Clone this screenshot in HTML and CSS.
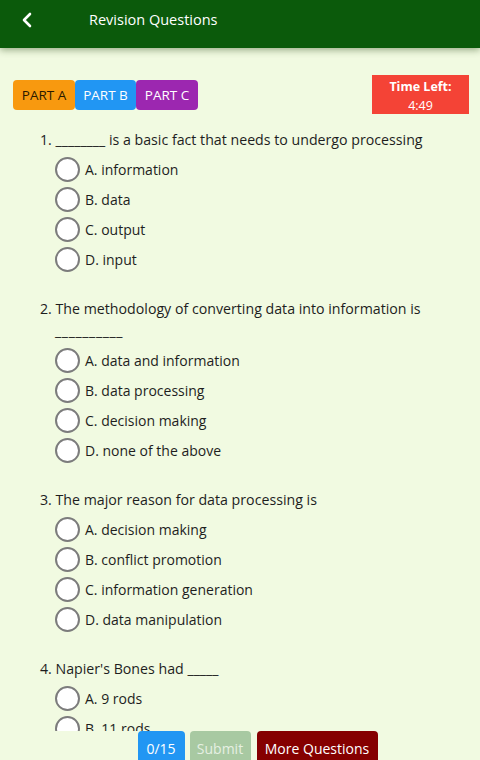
FILE: index.html
```html
<!DOCTYPE html>
<html>
<head>
<meta charset="utf-8">
<link rel="stylesheet" href="styles.css">
</head>
<body>
<div class="app">
  <header class="topbar">
    <svg class="back" width="14" height="16" viewBox="0 0 14 16"><path d="M10 2 L4 8 L10 14" fill="none" stroke="#fff" stroke-width="2.6" stroke-linecap="round" stroke-linejoin="round"/></svg>
    <span class="title">Revision Questions</span>
  </header>
  <main class="content">
    <div class="toolbar">
      <div class="tabs">
        <span class="tab tab-a">PART A</span>
        <span class="tab tab-b">PART B</span>
        <span class="tab tab-c">PART C</span>
      </div>
      <div class="timer">
        <div class="timer-label">Time Left:</div>
        <div class="timer-value">4:49</div>
      </div>
    </div>

    <section class="question">
      <p class="q-text">1. ________ is a basic fact that needs to undergo processing</p>
      <div class="option"><span class="radio"></span><span>A. information</span></div>
      <div class="option"><span class="radio"></span><span>B. data</span></div>
      <div class="option"><span class="radio"></span><span>C. output</span></div>
      <div class="option"><span class="radio"></span><span>D. input</span></div>
    </section>

    <section class="question">
      <p class="q-text">2. The methodology of converting data into information is<br><span class="blank">__________</span></p>
      <div class="option"><span class="radio"></span><span>A. data and information</span></div>
      <div class="option"><span class="radio"></span><span>B. data processing</span></div>
      <div class="option"><span class="radio"></span><span>C. decision making</span></div>
      <div class="option"><span class="radio"></span><span>D. none of the above</span></div>
    </section>

    <section class="question">
      <p class="q-text">3. The major reason for data processing is</p>
      <div class="option"><span class="radio"></span><span>A. decision making</span></div>
      <div class="option"><span class="radio"></span><span>B. conflict promotion</span></div>
      <div class="option"><span class="radio"></span><span>C. information generation</span></div>
      <div class="option"><span class="radio"></span><span>D. data manipulation</span></div>
    </section>

    <section class="question">
      <p class="q-text">4. Napier's Bones had _____</p>
      <div class="option"><span class="radio"></span><span>A. 9 rods</span></div>
      <div class="option"><span class="radio"></span><span>B. 11 rods</span></div>
      <div class="option"><span class="radio"></span><span>C. 10 rods</span></div>
      <div class="option"><span class="radio"></span><span>D. 12 rods</span></div>
    </section>
  </main>
  <footer class="actions">
    <span class="btn btn-count">0/15</span>
    <span class="btn btn-submit">Submit</span>
    <span class="btn btn-more">More Questions</span>
  </footer>
</div>
</body>
</html>
```

FILE: styles.css
```css
* { box-sizing: border-box; }
html, body {
  margin: 0;
  padding: 0;
  width: 480px;
  height: 760px;
  overflow: hidden;
  background: #f1fae1;
  font-family: "Open Sans", "Noto Sans", sans-serif;
  color: #1e1e1e;
}
.app {
  display: flex;
  flex-direction: column;
  height: 760px;
}
.topbar {
  flex: 0 0 48px;
  height: 48px;
  background: #0b5a0b;
  display: flex;
  align-items: center;
  padding-left: 20px;
  box-shadow: 0 2px 7px rgba(40, 70, 20, 0.45);
  position: relative;
  z-index: 2;
}
.back { margin-top: -8px; }
.title {
  color: #fff;
  font-size: 14.5px;
  margin-left: 55px;
  margin-top: -10px;
}
.content {
  flex: 1 1 auto;
  min-height: 0;
  overflow: hidden;
  padding: 27px 11px 0 0;
}
.toolbar {
  display: flex;
  justify-content: space-between;
  align-items: center;
  padding-left: 13px;
  margin-bottom: 15px;
}
.tabs { display: flex; }
.tab {
  height: 30px;
  width: 62px;
  display: flex;
  align-items: center;
  justify-content: center;
  font-size: 13.5px;
  border-radius: 4px;
  color: #fff;
}
.tab-a { background: #f8990f; color: #2a1a00; width: 62px; }
.tab-b { background: #2196f3; width: 61px; }
.tab-c { background: #9c27b0; width: 62px; }
.timer {
  width: 97px;
  height: 39px;
  background: #f44336;
  color: #fff;
  text-align: center;
  font-size: 12.5px;
  line-height: 19px;
  padding-top: 2px;
}
.timer-label { font-weight: 700; }
.timer-value { margin-top: 0; }
.question {
  padding-left: 40px;
  margin-bottom: 24px;
}
.q-text {
  margin: 0 0 3px 0;
  font-size: 14.2px;
  line-height: 22px;
}
.blank { padding-left: 15px; letter-spacing: 0.6px; }
.option {
  display: flex;
  align-items: center;
  height: 30px;
  padding-left: 15px;
  font-size: 14px;
}
.radio {
  width: 25px;
  height: 25px;
  border-radius: 50%;
  border: 2px solid #7c7c7c;
  background: #fff;
  margin-right: 5px;
  flex: 0 0 auto;
}
.actions {
  flex: 0 0 29px;
  min-height: 0;
  height: 29px;
  display: flex;
  justify-content: center;
  align-items: flex-start;
  padding-left: 35px;
  gap: 5px;
}
.btn {
  height: 34px;
  flex: 0 0 auto;
  display: flex;
  align-items: center;
  justify-content: center;
  font-size: 14px;
  color: #fff;
  border-radius: 4px 4px 0 0;
}
.btn-count { background: #2196f3; width: 47px; }
.btn-submit { background: #a8c9a2; width: 61px; color: #e6f0e2; }
.btn-more { background: #850000; width: 121px; margin-left: 1px; }
```
